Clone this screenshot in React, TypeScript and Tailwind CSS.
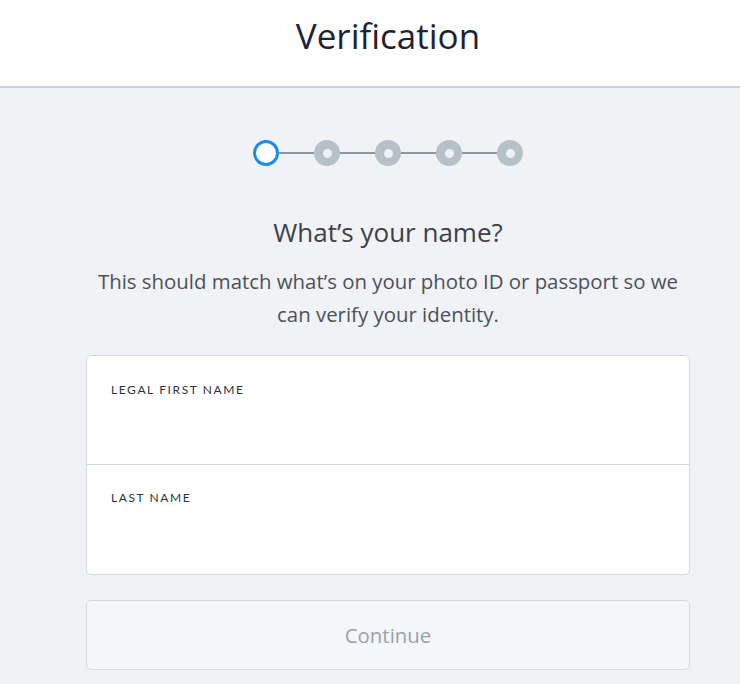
import React from "react";

function Stepper() {
  const dots = [0, 1, 2, 3, 4];
  return (
    <div className="flex items-center justify-center">
      {dots.map((i) => (
        <React.Fragment key={i}>
          {i > 0 && <div className="h-[2px] w-[35px] bg-[#8e979e]" />}
          {i === 0 ? (
            <div className="h-[26px] w-[26px] rounded-full border-[3.5px] border-[#1a8cf0] bg-white" />
          ) : (
            <div className="flex h-[26px] w-[26px] items-center justify-center rounded-full bg-[#b6c0c7]">
              <div className="h-[9px] w-[9px] rounded-full bg-[#eef1f4]" />
            </div>
          )}
        </React.Fragment>
      ))}
    </div>
  );
}

export default function App() {
  return (
    <div
      className="h-[684px] w-full overflow-hidden bg-[#f0f2f6]"
      style={{ fontFamily: "'Open Sans', Lato, sans-serif" }}
    >
      <div className="w-full border-b-2 border-[#cbd3d9] bg-white">
        <div className="w-[776px]">
          <div className="flex h-[86px] items-center justify-center pb-[14px] text-[35px] text-[#1c2433]">
            Verification
          </div>
        </div>
      </div>
      <div className="w-[776px] px-[86px] pt-[52px]">
        <Stepper />
        <h2 className="mt-[49px] text-center text-[26px] leading-[34px] text-[#3b4149]">
          What’s your name?
        </h2>
        <p className="mx-auto mt-[16px] text-center text-[20.4px] leading-[33px] text-[#4b5159]">
          This should match what’s on your photo ID or passport so we
          <br />
          can verify your identity.
        </p>
        <div className="mt-[24px] overflow-hidden rounded-[5px] border border-[#d3d9df] bg-white">
          <div className="h-[109px] border-b border-[#d3d9df] px-[24px] pt-[26px]">
            <div className="text-[12px] leading-[16px] tracking-[1.6px] text-[#2d3340]" style={{ fontFamily: "Lato, sans-serif" }}>
              LEGAL FIRST NAME
            </div>
          </div>
          <div className="h-[109px] px-[24px] pt-[25px]">
            <div className="text-[12px] leading-[16px] tracking-[1.6px] text-[#2d3340]" style={{ fontFamily: "Lato, sans-serif" }}>
              LAST NAME
            </div>
          </div>
        </div>
        <button className="mt-[25px] flex h-[70px] w-full items-center justify-center rounded-[5px] border border-[#d3d9df] bg-[#f4f6f9] text-[20.4px] text-[#9aa1a8]">
          Continue
        </button>
      </div>
    </div>
  );
}
